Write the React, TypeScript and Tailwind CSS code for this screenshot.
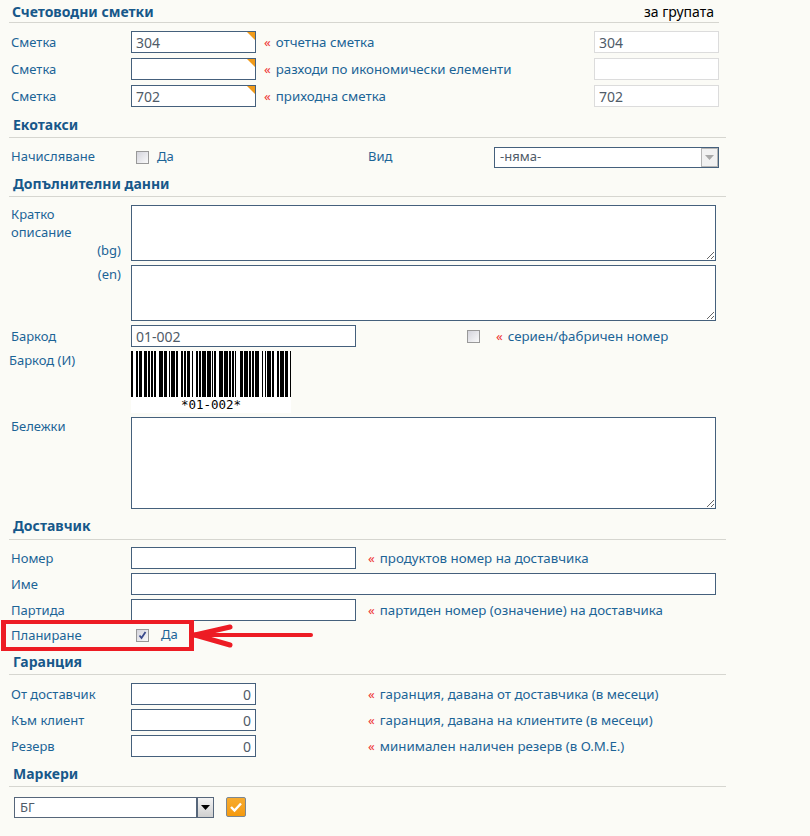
import { ReactNode } from 'react';

const CODE39: Record<string, string> = {
  '*': 'nwnnwnwnn',
  '0': 'nnnwwnwnn',
  '1': 'wnnwnnnnw',
  '2': 'nnwwnnnnw',
  '-': 'nwnnnnwnw',
};

function Barcode({ value }: { value: string }) {
  const narrow = 1.39;
  const wide = 3.48;
  let x = 0;
  const bars: { x: number; w: number }[] = [];
  value.split('').forEach(ch => {
    CODE39[ch].split('').forEach((el, i) => {
      const w = el === 'w' ? wide : narrow;
      if (i % 2 === 0) bars.push({ x, w });
      x += w;
    });
    x += narrow;
  });

  return (
    <div className="w-[160px] h-[62px] bg-white flex flex-col items-center">
      <svg width="160" height="46" viewBox="0 0 160 46" className="block shrink-0" shapeRendering="crispEdges">
        {bars.map(b => (
          <rect key={b.x} x={b.x} y="0" width={b.w + 0.3} height="46" fill="#000" />
        ))}
      </svg>
      <span className="font-['DejaVu_Sans_Mono',monospace] text-[12.5px] leading-[15px] text-black">{value}</span>
    </div>
  );
}

function SectionHeader({ title, right, narrow, lift }: { title: string; right?: string; narrow?: boolean; lift?: boolean }) {
  return (
    <div className={`flex justify-between items-center h-[23px] border-b border-[#d6d6d0] ${lift ? 'pb-[5px]' : 'pb-[3px]'} ${narrow ? 'w-[710px] pl-[3px] pt-[3px]' : 'w-[717px] pl-[4px]'}`}>
      <span className="font-bold text-[14px] text-[#17588a]">{title}</span>
      {right && <span className="text-black text-[14px] pr-[5px]">{right}</span>}
    </div>
  );
}

function Label({ children, flat }: { children: ReactNode; flat?: boolean }) {
  return <span className={`w-[122px] shrink-0 pl-[2px] text-[13px] text-[#1c6496] ${flat ? '' : 'pt-[2px]'}`}>{children}</span>;
}

function Hint({ text, className = '' }: { text: string; className?: string }) {
  return (
    <span className={`flex gap-[5px] pt-[1px] text-[13.3px] text-[#1c6496] whitespace-nowrap ${className}`}>
      <span className="text-[#ee3333]">«</span>
      {text}
    </span>
  );
}

function TextInput({ value = '', width, right, flag, muted }: { value?: string; width: string; right?: boolean; flag?: boolean; muted?: boolean }) {
  return (
    <div className={`relative h-[22px] shrink-0 ${width}`}>
      <input
        readOnly
        value={value}
        className={`w-full h-full bg-white border px-[4px] text-[14px] outline-none text-[#4f5b68] ${muted ? 'border-[#dcdcdc]' : 'border-[#45607c]'} ${right ? 'text-right' : ''}`}
      />
      {flag && (
        <svg width="8" height="8" viewBox="0 0 8 8" className="absolute top-[1px] right-[1px]">
          <polygon points="0,0 8,0 8,8" fill="#f09a1a" />
        </svg>
      )}
    </div>
  );
}

function Checkbox({ checked }: { checked?: boolean }) {
  return (
    <span className="w-[13px] h-[13px] shrink-0 border border-[#999] bg-gradient-to-br from-[#d4d4dc] to-[#fafafa] flex items-center justify-center">
      {checked && (
        <svg width="9" height="9" viewBox="0 0 9 9">
          <path d="M1.5 4.5 L3.5 7 L7.5 1" fill="none" stroke="#3a4a8c" strokeWidth="1.8" />
        </svg>
      )}
    </span>
  );
}

function AccountRow({ hint, value, groupValue }: { hint: string; value?: string; groupValue?: string }) {
  return (
    <div className="flex items-center h-[22px] w-[710px]">
      <Label>Сметка</Label>
      <TextInput value={value} width="w-[125px]" flag />
      <Hint text={hint} className="ml-[8px]" />
      <div className="ml-auto">
        <TextInput value={groupValue} width="w-[125px]" muted />
      </div>
    </div>
  );
}

function WarrantyRow({ label, hint }: { label: string; hint: string }) {
  return (
    <div className="flex items-center h-[22px]">
      <Label>{label}</Label>
      <TextInput value="0" width="w-[125px]" right />
      <Hint text={hint} className="ml-[112px]" />
    </div>
  );
}

function Area({ height }: { height: string }) {
  return <textarea readOnly className={`block w-[585px] bg-white border border-[#45607c] outline-none ${height}`} />;
}

export default function App() {
  return (
    <div className="w-[810px] h-[836px] bg-[#fbfbf6] pl-[9px] overflow-hidden font-['Noto_Sans',sans-serif] text-[13px]">
      <SectionHeader title="Счетоводни сметки" right="за групата" narrow />
      <div className="mt-[8px] flex flex-col gap-[5px]">
        <AccountRow hint="отчетна сметка" value="304" groupValue="304" />
        <AccountRow hint="разходи по икономически елементи" />
        <AccountRow hint="приходна сметка" value="702" groupValue="702" />
      </div>

      <div className="mt-[8px]">
        <SectionHeader title="Екотакси" />
      </div>
      <div className="mt-[8px] flex items-center h-[22px]">
        <Label flat>Начисляване</Label>
        <div className="w-[237px] shrink-0 flex items-center gap-[8px] pl-[5px] text-[#1c6496]">
          <Checkbox />
          Да
        </div>
        <span className="w-[126px] shrink-0 text-[#1c6496]">Вид</span>
        <div className="w-[225px] h-[21px] bg-white border border-[#45607c] flex items-center justify-between pl-[5px] text-[#4f5b68]">
          -няма-
          <span className="w-[17px] h-[19px] bg-[#f1f1f1] border border-[#b5b5b5] flex items-center justify-center">
            <svg width="9" height="5" viewBox="0 0 9 5">
              <polygon points="0,0 9,0 4.5,5" fill="#a8a8a8" />
            </svg>
          </span>
        </div>
      </div>

      <div className="mt-[6px]">
        <SectionHeader title="Допълнителни данни" />
      </div>
      <div className="mt-[8px] flex">
        <div className="w-[122px] shrink-0 pl-[2px] text-[13px] text-[#1c6496] leading-[18px]">
          Кратко
          <br />
          описание
          <div className="text-right pr-[10px]">(bg)</div>
        </div>
        <Area height="h-[56px]" />
      </div>
      <div className="mt-[4px] flex">
        <div className="w-[122px] shrink-0 text-right pr-[10px] text-[13px] text-[#1c6496] leading-[18px]">(en)</div>
        <Area height="h-[56px]" />
      </div>
      <div className="mt-[4px] flex items-center h-[22px]">
        <Label>Баркод</Label>
        <TextInput value="01-002" width="w-[225px]" />
        <div className="ml-[111px]">
          <Checkbox />
        </div>
        <Hint text="сериен/фабричен номер" className="ml-[16px]" />
      </div>
      <div className="mt-[4px] flex">
        <span className="w-[122px] shrink-0 text-[13px] text-[#1c6496]">Баркод (И)</span>
        <Barcode value="*01-002*" />
      </div>
      <div className="mt-[4px] flex">
        <span className="w-[122px] shrink-0 pl-[2px] text-[13px] text-[#1c6496]">Бележки</span>
        <Area height="h-[92px]" />
      </div>

      <div className="mt-[8px]">
        <SectionHeader title="Доставчик" lift />
      </div>
      <div className="mt-[7px] flex flex-col gap-[4px]">
        <div className="flex items-center h-[22px]">
          <Label>Номер</Label>
          <TextInput width="w-[225px]" />
          <Hint text="продуктов номер на доставчика" className="ml-[12px]" />
        </div>
        <div className="flex items-center h-[22px]">
          <Label>Име</Label>
          <TextInput width="w-[585px]" />
        </div>
        <div className="flex items-center h-[22px]">
          <Label>Партида</Label>
          <TextInput width="w-[225px]" />
          <Hint text="партиден номер (означение) на доставчика" className="ml-[12px]" />
        </div>
      </div>
      <div className="relative mt-[4px] flex items-center h-[20px]">
        <Label>Планиране</Label>
        <div className="flex items-center gap-[12px] pl-[5px] text-[#1c6496]">
          <Checkbox checked />
          Да
        </div>
        <div className="absolute left-[-8px] top-[-5px] w-[193px] h-[31px] border-x-[5px] border-y-[4px] border-[#ed1c24]" />
        <svg width="125" height="30" viewBox="0 0 125 30" className="absolute left-[183px] top-[-5px]">
          <g stroke="#ed1c24" strokeLinecap="round" fill="none">
            <line x1="6" y1="15" x2="119" y2="15" strokeWidth="4" />
            <line x1="3" y1="15" x2="38" y2="7" strokeWidth="5" />
            <line x1="3" y1="15" x2="38" y2="25" strokeWidth="5" />
          </g>
        </svg>
      </div>

      <div className="mt-[7px]">
        <SectionHeader title="Гаранция" />
      </div>
      <div className="mt-[8px] flex flex-col gap-[4px]">
        <WarrantyRow label="От доставчик" hint="гаранция, давана от доставчика (в месеци)" />
        <WarrantyRow label="Към клиент" hint="гаранция, давана на клиентите (в месеци)" />
        <WarrantyRow label="Резерв" hint="минимален наличен резерв (в О.М.Е.)" />
      </div>

      <div className="mt-[7px]">
        <SectionHeader title="Маркери" />
      </div>
      <div className="mt-[10px] ml-[5px] flex items-start">
        <div className="w-[200px] h-[21px] bg-white border border-[#56667a] flex items-center justify-between pl-[5px] text-[#4f5b68]">
          БГ
          <span className="w-[17px] h-[19px] border-l-2 border-[#56667a] bg-gradient-to-b from-[#f4f4f4] to-[#cfcfcf] flex items-center justify-center">
            <svg width="9" height="5" viewBox="0 0 9 5">
              <polygon points="0,0 9,0 4.5,5" fill="#000" />
            </svg>
          </span>
        </div>
        <button className="ml-[12px] w-[20px] h-[20px] rounded-[2px] border border-[#7d8790] bg-gradient-to-b from-[#f7ab2e] to-[#f59a0c] flex items-center justify-center">
          <svg width="14" height="12" viewBox="0 0 14 12">
            <path d="M2 6 L5.5 9.5 L12 2.5" fill="none" stroke="#fff" strokeWidth="2.4" />
          </svg>
        </button>
      </div>
    </div>
  );
}
